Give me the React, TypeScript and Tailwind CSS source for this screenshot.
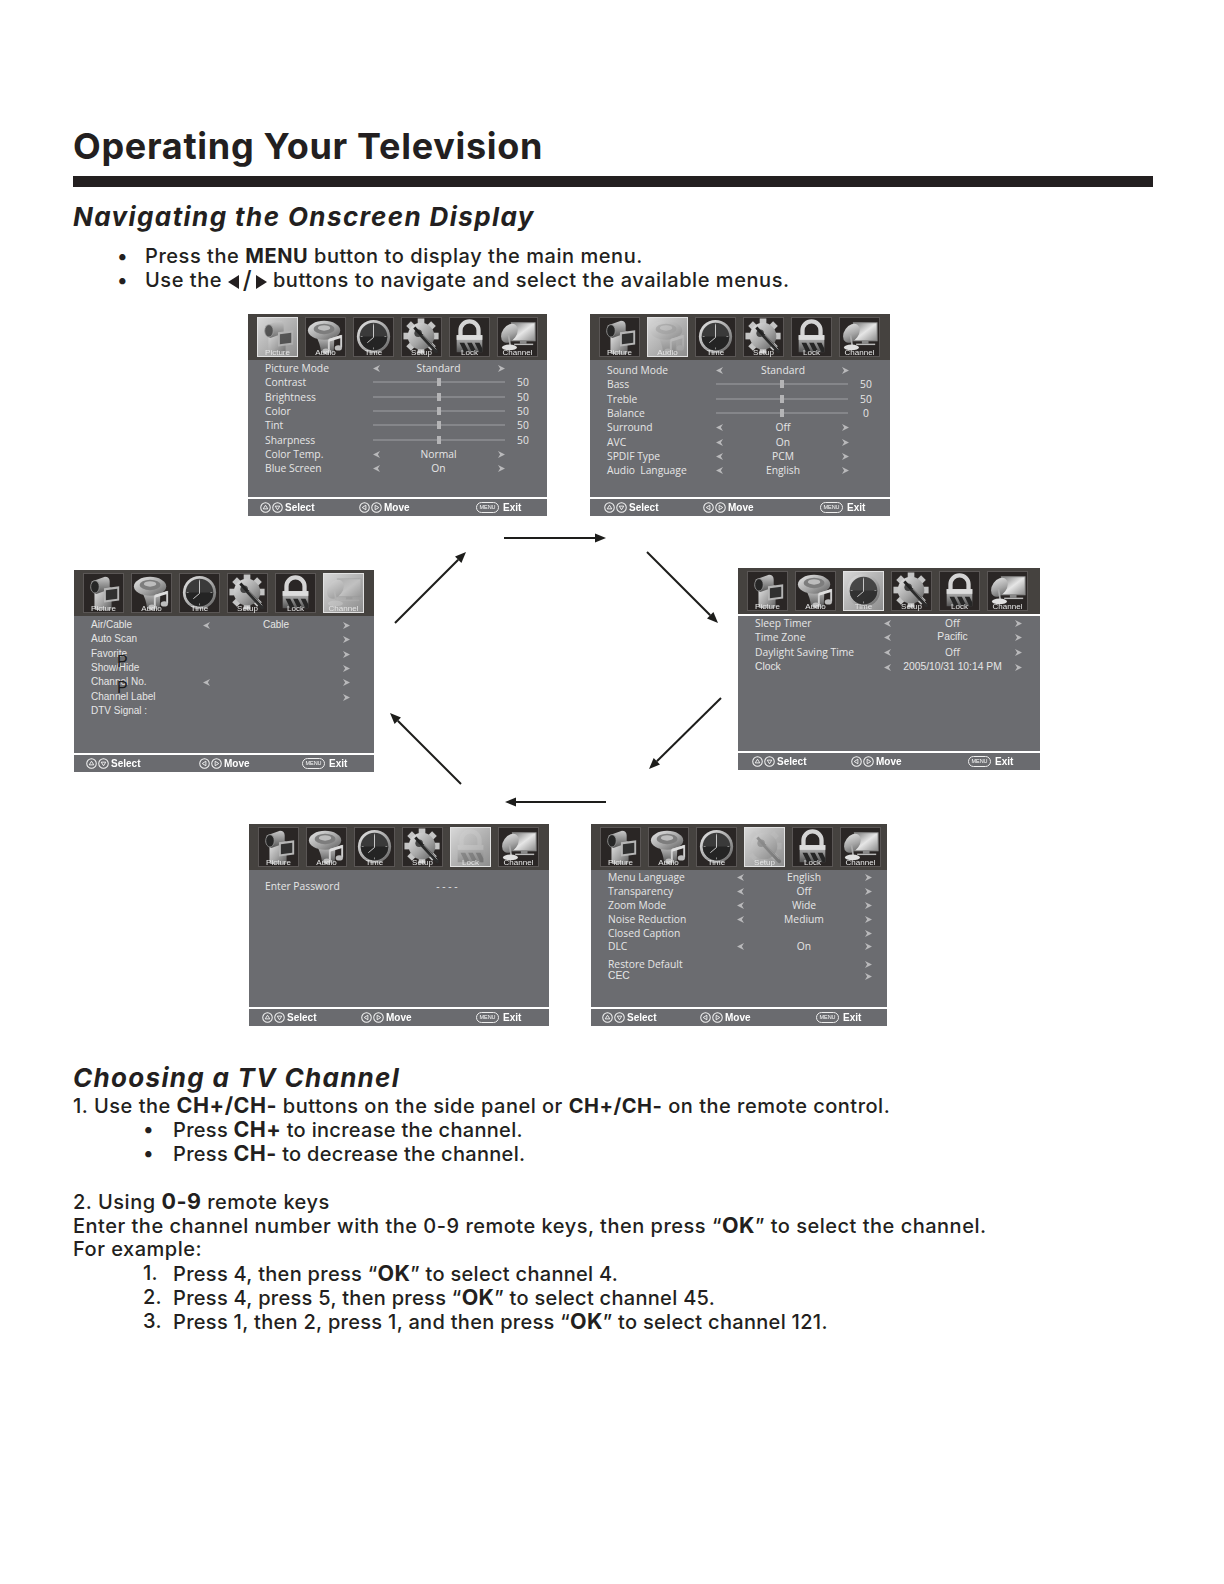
import React from "react";

type Row = { label: string; value?: string; slider?: boolean; num?: string; left?: boolean; right?: boolean; h?: string; arial?: boolean; valArial?: boolean };
type PanelData = {
  box: string; cols: string; pad: string; foot: string; active: number; rule?: boolean; rows: Row[]; arial?: boolean; size?: string;
};

const NAMES = ["Picture", "Audio", "Time", "Setup", "Lock", "Channel"];

function Defs() {
  return (
    <svg className="absolute w-0 h-0">
      <defs>
        <linearGradient id="sv" x1="0" y1="0" x2="1" y2="1">
          <stop offset="0" stopColor="#e8e8e8" />
          <stop offset="0.55" stopColor="#a5a5a5" />
          <stop offset="1" stopColor="#5c5c5c" />
        </linearGradient>
        <linearGradient id="sd" x1="0" y1="0" x2="0" y2="1">
          <stop offset="0" stopColor="#c8c8c8" />
          <stop offset="1" stopColor="#555" />
        </linearGradient>
        <linearGradient id="mon" x1="0" y1="0" x2="1" y2="1">
          <stop offset="0" stopColor="#777" />
          <stop offset="0.5" stopColor="#e6e6e6" />
          <stop offset="1" stopColor="#8a8a8a" />
        </linearGradient>
      </defs>
    </svg>
  );
}

function Drawing({ i }: { i: number }) {
  if (i === 0)
    return (
      <g>
        <rect x="11" y="14" width="18" height="24" rx="2" fill="url(#sv)" />
        <path d="M8 8 L22 3 Q27 3 27 8 L27 16 L13 21 Q7 19 7 14 Z" fill="url(#sd)" />
        <ellipse cx="11.5" cy="13.5" rx="4.5" ry="6.5" fill="#262626" stroke="#999" strokeWidth="0.8" />
        <path d="M21 15 L37 13 L37 28 L21 30 Z" fill="#b5b5b5" />
        <path d="M23 17 L35 15.5 L35 26 L23 27.5 Z" fill="#303030" />
      </g>
    );
  if (i === 1)
    return (
      <g>
        <path d="M10 18 Q15 27 16 37 L29 37 L30 18 Z" fill="url(#sd)" />
        <ellipse cx="19" cy="13" rx="17" ry="10" fill="url(#sv)" />
        <ellipse cx="19" cy="11.5" rx="11" ry="5.5" fill="#7d7d7d" />
        <ellipse cx="19" cy="10.5" rx="6.5" ry="2.8" fill="#bdbdbd" />
        <path d="M24 23 L37 19 L37 31 M24 23 L24 35" stroke="#cfcfcf" strokeWidth="2" fill="none" />
        <path d="M24 22 L37 18 L37 21 L24 25 Z" fill="#dedede" />
        <ellipse cx="21" cy="35" rx="3.8" ry="2.8" fill="#bdbdbd" />
        <ellipse cx="34" cy="31.5" rx="3.8" ry="2.8" fill="#bdbdbd" />
      </g>
    );
  if (i === 2)
    return (
      <g>
        <circle cx="20.5" cy="19.5" r="17.5" fill="url(#sv)" />
        <circle cx="20.5" cy="19.5" r="14.5" fill="#3a3a3a" />
        <path d="M6 19.5 A14.5 14.5 0 0 0 35 19.5 Z" fill="#242424" />
        <path d="M20.5 7 L20.5 20.5 L14 26" stroke="#e0e0e0" strokeWidth="0.9" fill="none" />
        <path d="M20.5 6 v2 M20.5 31 v2 M7 19.5 h2 M32 19.5 h2" stroke="#aaa" strokeWidth="0.8" />
      </g>
    );
  if (i === 3)
    return (
      <g>
        <g fill="#c4c4c4">
          {[0, 45, 90, 135].map((a) => (
            <rect key={a} x="16.5" y="0.5" width="7" height="37" transform={`rotate(${a} 20 19)`} />
          ))}
        </g>
        <circle cx="20" cy="19" r="14" fill="url(#sv)" />
        <circle cx="17" cy="16" r="4" fill="#444" />
        <path d="M13 10 L21 19" stroke="#222" strokeWidth="3" />
        <path d="M21 19 L36 35" stroke="#2c2c2c" strokeWidth="4" strokeLinecap="round" />
        <path d="M22 18 L36 33" stroke="#999" strokeWidth="1" />
      </g>
    );
  if (i === 4)
    return (
      <g>
        <path d="M11 20 V13 A9.5 9.5 0 0 1 30 13 V20" stroke="#d4d4d4" strokeWidth="4.5" fill="none" />
        <rect x="7" y="18" width="27" height="18" fill="url(#sd)" />
        <rect x="7" y="18" width="27" height="5" fill="#dcdcdc" />
        <path d="M10 26 h5 l5 10 h-5 Z M18 26 h5 l5 10 h-5 Z M26 26 h5 l3 6 v4 h-3 Z" fill="#262626" />
      </g>
    );
  return (
    <g>
      <rect x="14" y="5" width="25" height="19" fill="url(#mon)" stroke="#8b8b8b" />
      <rect x="23" y="24" width="7" height="3" fill="#888" />
      <rect x="17" y="27" width="20" height="1.5" fill="#bbb" />
      <ellipse cx="12" cy="16" rx="7.5" ry="11" transform="rotate(35 12 16)" fill="url(#sv)" />
      <path d="M11 18 L13 30" stroke="#aaa" strokeWidth="1.8" />
      <ellipse cx="12" cy="31" rx="8" ry="3" fill="#e0e0e0" />
    </g>
  );
}

function Tile({ i, active }: { i: number; active: boolean }) {
  const wash = i === 2 ? "opacity-90" : i === 0 ? "opacity-70" : "opacity-30";
  return (
    <div className={`relative w-[41px] h-[40px] shrink-0 border ${active ? "border-[#e2e2e2] bg-gradient-to-br from-[#d8d8d8] to-[#8e8e8e]" : "border-[#5a5655] bg-[#2a2625]"}`}>
      <svg viewBox="0 0 41 40" className={`absolute inset-0 w-full h-full ${active ? wash : ""}`}>
        <Drawing i={i} />
      </svg>
      <div className={`absolute -bottom-[2px] inset-x-0 text-center text-[8px] leading-[10px] tracking-normal font-normal font-['Liberation_Sans',sans-serif] ${active ? "text-[#e4e4e4]" : "text-[#e8e8e8]"}`}>
        {NAMES[i]}
      </div>
    </div>
  );
}

function Chev({ right }: { right?: boolean }) {
  return (
    <svg viewBox="0 0 6 6" className="w-[7px] h-[7px] mx-auto mt-[1px]">
      <path d={right ? "M0 0 L6 3 L0 6 L1.8 3 Z" : "M6 0 L0 3 L6 6 L4.2 3 Z"} fill="#b9b9bb" />
    </svg>
  );
}

function Circ({ d }: { d: string }) {
  return (
    <svg viewBox="0 0 12 12" className="w-[11px] h-[11px] shrink-0 mr-[1px]">
      <circle cx="6" cy="6" r="5.2" fill="none" stroke="#f4f4f4" strokeWidth="1.1" />
      <path d={d} fill="none" stroke="#f4f4f4" strokeWidth="1" />
    </svg>
  );
}

function Footer({ foot }: { foot: string }) {
  return (
    <div className={`h-[17px] bg-[#6a6b6f] grid items-center text-white font-bold text-[10px] leading-[12px] tracking-normal font-['Liberation_Sans',sans-serif] ${foot}`}>
      <div className="flex items-center">
        <Circ d="M3.5 7.5 L6 3.5 L8.5 7.5 Z" />
        <Circ d="M3.5 4.5 L6 8.5 L8.5 4.5 Z" />
        <span className="ml-[1px]">Select</span>
      </div>
      <div className="flex items-center">
        <Circ d="M7.5 3.5 L3.5 6 L7.5 8.5 Z" />
        <Circ d="M4.5 3.5 L8.5 6 L4.5 8.5 Z" />
        <span className="ml-[1px]">Move</span>
      </div>
      <div className="flex items-center">
        <span className="w-[23px] h-[11px] rounded-full border border-[#eee] text-[5.5px] leading-[9px] text-center font-normal">MENU</span>
        <span className="ml-[4px]">Exit</span>
      </div>
    </div>
  );
}

function RowView({ r, cols, panelArial, size }: { r: Row; cols: string; panelArial?: boolean; size?: string }) {
  const lab = r.arial || panelArial ? "font-['Liberation_Sans',sans-serif]" : "font-['Open_Sans',sans-serif]";
  const val = r.valArial || panelArial ? "font-['Liberation_Sans',sans-serif]" : "font-['Open_Sans',sans-serif]";
  return (
    <div className={`grid items-center leading-[14px] font-normal tracking-normal text-[#e6e6e6] ${size ?? "text-[10.3px]"} ${cols} ${r.h ?? "h-[14.3px]"}`}>
      <div className={`whitespace-pre ${lab}`}>{r.label}</div>
      {r.slider ? (
        <div className="col-span-3 flex items-center h-full px-[3px]">
          <div className="flex-1 h-[2px] bg-[#85868a]" />
          <div className="w-[4px] h-[8px] bg-[#b4b4b6]" />
          <div className="flex-1 h-[2px] bg-[#85868a]" />
        </div>
      ) : (
        <>
          <div>{r.left && <Chev />}</div>
          <div className={`text-center whitespace-nowrap ${val}`}>{r.value}</div>
          <div>{r.right && <Chev right />}</div>
        </>
      )}
      {r.num !== undefined && <div className="text-center font-['Open_Sans',sans-serif]">{r.num}</div>}
    </div>
  );
}

function Panel({ p, children }: { p: PanelData; children?: React.ReactNode }) {
  return (
    <div className={`absolute flex flex-col blur-[0.35px] ${p.box}`}>
      <div className="h-[46px] shrink-0 bg-[#45423f] flex items-start pt-[3px] pl-[9px] gap-[7px]">
        {NAMES.map((_, i) => (
          <Tile key={i} i={i} active={p.active === i} />
        ))}
      </div>
      {p.rule && <div className="h-[2px] shrink-0 bg-white" />}
      <div className={`relative flex-1 bg-[#6b6c70] ${p.pad}`}>
        {p.rows.map((r) => (
          <RowView key={r.label} r={r} cols={p.cols} panelArial={p.arial} size={p.size} />
        ))}
        {children}
      </div>
      <div className="h-[2px] shrink-0 bg-white" />
      <Footer foot={p.foot} />
    </div>
  );
}

const lr = { left: true, right: true };

const PANELS: Record<string, PanelData> = {
  picture: {
    box: "left-[248px] top-[0px] w-[299px] h-[202px]",
    cols: "grid-cols-[105px_12px_113px_13px_30px]",
    pad: "pl-[17px] pt-[1px]",
    foot: "pl-[12px] grid-cols-[99px_117px_auto]",
    active: 0,
    rows: [
      { label: "Picture Mode", value: "Standard", ...lr },
      { label: "Contrast", slider: true, num: "50" },
      { label: "Brightness", slider: true, num: "50" },
      { label: "Color", slider: true, num: "50" },
      { label: "Tint", slider: true, num: "50" },
      { label: "Sharpness", slider: true, num: "50" },
      { label: "Color Temp.", value: "Normal", ...lr },
      { label: "Blue Screen", value: "On", ...lr },
    ],
  },
  audio: {
    box: "left-[590px] top-[0px] w-[300px] h-[202px]",
    cols: "grid-cols-[106px_13px_114px_11px_30px]",
    pad: "pl-[17px] pt-[3px]",
    foot: "pl-[14px] grid-cols-[99px_117px_auto]",
    active: 1,
    rows: [
      { label: "Sound Mode", value: "Standard", ...lr },
      { label: "Bass", slider: true, num: "50" },
      { label: "Treble", slider: true, num: "50" },
      { label: "Balance", slider: true, num: "0" },
      { label: "Surround", value: "Off", ...lr },
      { label: "AVC", value: "On", ...lr },
      { label: "SPDIF Type", value: "PCM", ...lr },
      { label: "Audio  Language", value: "English", ...lr },
    ],
  },
  time: {
    box: "left-[738px] top-[254px] w-[302px] h-[202px]",
    cols: "grid-cols-[126px_12px_119px_12px]",
    pad: "pl-[17px]",
    foot: "pl-[14px] grid-cols-[99px_117px_auto]",
    active: 2,
    rule: true,
    rows: [
      { label: "Sleep Timer", value: "Off", ...lr },
      { label: "Time Zone", value: "Pacific", valArial: true, ...lr },
      { label: "Daylight Saving Time", value: "Off", ...lr },
      { label: "Clock", value: "2005/10/31 10:14 PM", arial: true, valArial: true, ...lr, h: "h-[16px]" },
    ],
  },
  channel: {
    box: "left-[74px] top-[256px] w-[300px] h-[202px]",
    cols: "grid-cols-[109px_12px_128px_12px]",
    pad: "pl-[17px] pt-[2px]",
    foot: "pl-[12px] grid-cols-[113px_103px_auto]",
    active: 5,
    arial: true,
    size: "text-[10px]",
    rows: [
      { label: "Air/Cable", value: "Cable", ...lr },
      { label: "Auto Scan", right: true },
      { label: "Favorite", right: true },
      { label: "Show/Hide", right: true },
      { label: "Channel No.", ...lr },
      { label: "Channel Label", right: true },
      { label: "DTV Signal :" },
    ],
  },
  lock: {
    box: "left-[249px] top-[510px] w-[300px] h-[202px]",
    cols: "grid-cols-[105px_12px_130px_12px]",
    pad: "pl-[16px] pt-[9px]",
    foot: "pl-[13px] grid-cols-[99px_115px_auto]",
    active: 4,
    rows: [{ label: "Enter Password", value: "- - - -" }],
  },
  setup: {
    box: "left-[591px] top-[510px] w-[296px] h-[202px]",
    cols: "grid-cols-[126px_12px_116px_12px]",
    pad: "pl-[17px]",
    foot: "pl-[11px] grid-cols-[98px_116px_auto]",
    active: 3,
    rows: [
      { label: "Menu Language", value: "English", ...lr, h: "h-[14px]" },
      { label: "Transparency", value: "Off", ...lr, h: "h-[14px]" },
      { label: "Zoom Mode", value: "Wide", ...lr, h: "h-[14px]" },
      { label: "Noise Reduction", value: "Medium", ...lr, h: "h-[14px]" },
      { label: "Closed Caption", right: true, h: "h-[13px]" },
      { label: "DLC", value: "On", ...lr, h: "h-[14px]" },
      { label: "Restore Default", right: true, h: "h-[12px] mt-[4px]" },
      { label: "CEC", right: true, arial: true, h: "h-[11px]" },
    ],
  },
};

function Arrows() {
  const lines: [number, number, number, number][] = [
    [504, 224, 606, 224],
    [647, 238, 718, 309],
    [721, 384, 649, 455],
    [606, 488, 505, 488],
    [461, 470, 390, 399],
    [395, 309, 466, 238],
  ];
  return (
    <svg viewBox="0 0 1224 712" className="absolute inset-0 w-full h-full">
      {lines.map(([x1, y1, x2, y2], i) => {
        const a = Math.atan2(y2 - y1, x2 - x1);
        const L = 11;
        const W = 4.5;
        const bx = x2 - L * Math.cos(a);
        const by = y2 - L * Math.sin(a);
        const nx = -Math.sin(a) * W;
        const ny = Math.cos(a) * W;
        return (
          <g key={i}>
            <line x1={x1} y1={y1} x2={bx} y2={by} stroke="#1d1d1b" strokeWidth="2" />
            <polygon points={`${x2},${y2} ${bx + nx},${by + ny} ${bx - nx},${by - ny}`} fill="#1d1d1b" />
          </g>
        );
      })}
    </svg>
  );
}

function Tri({ right }: { right?: boolean }) {
  return (
    <svg viewBox="0 0 11 14" className="inline-block w-[11px] h-[14px] align-[-2px]">
      <path d={right ? "M0 0 L11 7 L0 14 Z" : "M11 0 L0 7 L11 14 Z"} fill="#231f20" />
    </svg>
  );
}

const B = ({ children }: { children: React.ReactNode }) => <b className="font-bold text-[21.5px]">{children}</b>;

function Item({ mark, children }: { mark: string; children: React.ReactNode }) {
  return (
    <div className="flex h-[24px] pl-[70px] tracking-[0.3px]">
      <span className="w-[30px]">{mark}</span>
      <span>{children}</span>
    </div>
  );
}

export default function App() {
  return (
    <div className="relative w-[1224px] h-[1584px] bg-white pl-[73px] pt-[124px] text-[#231f20] font-['Inter',sans-serif] font-medium text-[20px] leading-[24px] tracking-[0.5px] overflow-hidden">
      <Defs />
      <h1 className="text-[36px] leading-[44px] font-bold tracking-[0.7px]">Operating Your Television</h1>
      <div className="mt-[8px] h-[11px] w-[1080px] bg-[#231f20]" />
      <h2 className="mt-[14px] text-[26px] leading-[32px] font-bold italic tracking-[1.4px]">Navigating the Onscreen Display</h2>
      <div className="mt-[11px] pl-[44px] tracking-[0.55px]">
        <div className="flex h-[24px]">
          <span className="w-[28px]">•</span>
          <span>
            Press the <b className="font-bold">MENU</b> button to display the main menu.
          </span>
        </div>
        <div className="flex h-[24px]">
          <span className="w-[28px]">•</span>
          <span>
            Use the <Tri />
            <span className="inline-block w-[17px] text-center text-[24px] leading-[24px] align-[-1px]">/</span>
            <Tri right /> buttons to navigate and select the available menus.
          </span>
        </div>
      </div>

      <div className="relative mt-[22px] -ml-[73px] w-[1224px] h-[712px]">
        <Arrows />
        <Panel p={PANELS.picture} />
        <Panel p={PANELS.audio} />
        <Panel p={PANELS.time} />
        <Panel p={PANELS.channel}>
          <div className="absolute left-[43px] top-[38px] text-[16px] leading-[16px] tracking-normal text-[#1c1c1c] font-['Liberation_Sans',sans-serif]">P</div>
          <div className="absolute left-[43px] top-[64px] text-[16px] leading-[16px] tracking-normal text-[#1c1c1c] font-['Liberation_Sans',sans-serif]">P</div>
        </Panel>
        <Panel p={PANELS.lock} />
        <Panel p={PANELS.setup} />
      </div>

      <h2 className="mt-[36px] text-[26px] leading-[32px] font-bold italic tracking-[1.3px]">Choosing a TV Channel</h2>
      <div className="-mt-[1px]">
        <div className="h-[24px]">
          1. Use the <B>CH+/CH-</B> buttons on the side panel or <b className="font-bold">CH+/CH-</b> on the remote control.
        </div>
        <Item mark="•">
          Press <B>CH+</B> to increase the channel.
        </Item>
        <Item mark="•">
          Press <B>CH-</B> to decrease the channel.
        </Item>
        <div className="mt-[24px] h-[24px]">
          2. Using <B>0-9</B> remote keys
        </div>
        <div className="h-[24px]">
          Enter the channel number with the 0-9 remote keys, then press “<B>OK</B>” to select the channel.
        </div>
        <div className="h-[24px]">For example:</div>
        <Item mark="1.">
          Press 4, then press “<B>OK</B>” to select channel 4.
        </Item>
        <Item mark="2.">
          Press 4, press 5, then press “<B>OK</B>” to select channel 45.
        </Item>
        <Item mark="3.">
          Press 1, then 2, press 1, and then press “<B>OK</B>” to select channel 121.
        </Item>
      </div>
    </div>
  );
}
